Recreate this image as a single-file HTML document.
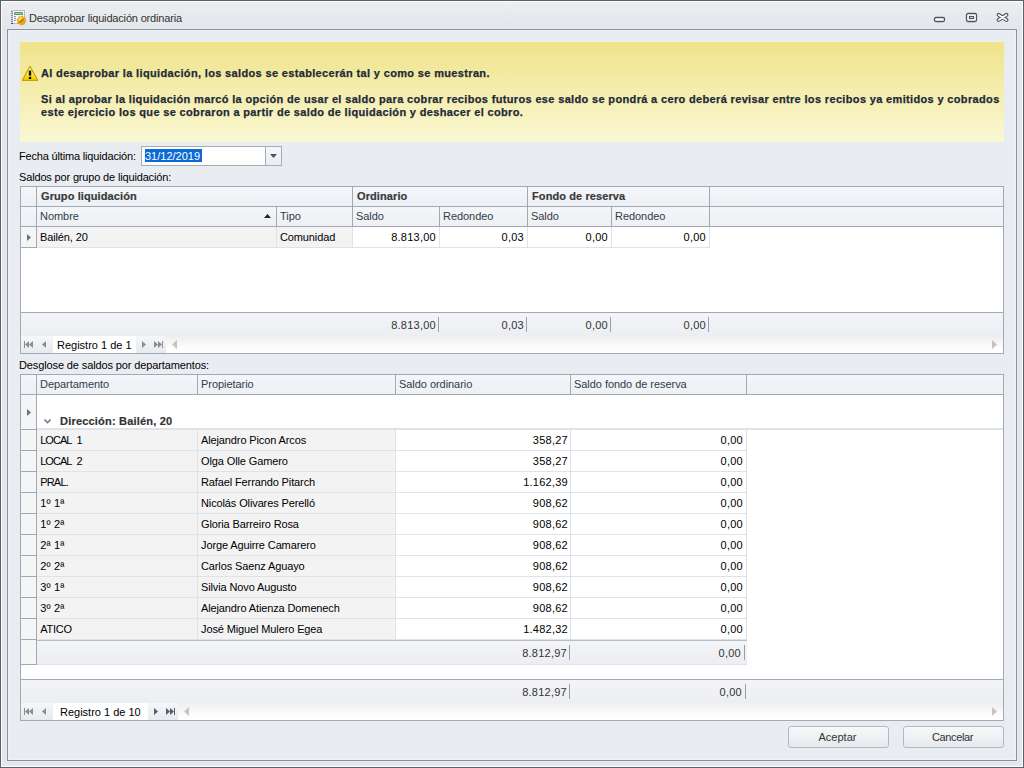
<!DOCTYPE html>
<html><head><meta charset="utf-8">
<style>
*{box-sizing:border-box;margin:0;padding:0}
html,body{width:1024px;height:768px;overflow:hidden}
body{position:relative;background:#e4e7eb;font-family:"Liberation Sans",sans-serif;font-size:11px;line-height:13px;color:#000}
.a{position:absolute}
.t{position:absolute;white-space:nowrap;line-height:13px}
.b{font-weight:bold;letter-spacing:0.345px;-webkit-text-stroke:0.25px #1f2a38}
svg{position:absolute;display:block}
</style></head><body>
<div class="a" style="left:0;top:0;width:1024px;height:768px;border:1px solid #59616d;background:linear-gradient(#eceef1,#e3e6ea 28px,#e3e6ea)"></div>
<div class="a" style="left:1px;top:1px;width:1022px;height:766px;border:1px solid #fff"></div>
<svg style="left:8px;top:6px" width="22" height="22" viewBox="0 0 22 22">
<rect x="3.5" y="4.5" width="13" height="13" fill="#f7f9fc" stroke="#b3bcc8" stroke-width="1"/>
<rect x="3" y="4" width="2" height="14" fill="#c9d0da"/>
<rect x="3" y="5" width="2" height="1" fill="#8a93a0"/><rect x="3" y="7" width="2" height="1" fill="#8a93a0"/><rect x="3" y="9" width="2" height="1" fill="#8a93a0"/><rect x="3" y="11" width="2" height="1" fill="#8a93a0"/><rect x="3" y="13" width="2" height="1" fill="#8a93a0"/><rect x="3" y="15" width="2" height="1" fill="#8a93a0"/><rect x="3" y="17" width="2" height="1" fill="#4d5765"/>
<rect x="6" y="6" width="9" height="3" rx="0.6" fill="#5c9f5c"/>
<rect x="7" y="7" width="7" height="1" fill="#9fd09f"/>
<rect x="6" y="10" width="2" height="1" fill="#7d93b5"/><rect x="6" y="12" width="2" height="1" fill="#7d93b5"/><rect x="6" y="14" width="2" height="1" fill="#7d93b5"/>
<path d="M18.11 15.52 L16.66 16.71 L16.11 18.51 L14.24 18.33 L12.58 19.21 L11.39 17.76 L9.59 17.21 L9.77 15.34 L8.89 13.68 L10.34 12.49 L10.89 10.69 L12.76 10.87 L14.42 9.99 L15.61 11.44 L17.41 11.99 L17.23 13.86Z" fill="#f3a81c" stroke="#e38c10" stroke-width="0.6"/>
<circle cx="12.6" cy="13" r="2.2" fill="#ffe24a" opacity="0.8"/>
<path d="M11 17 C11.8 14.5 13.5 13 16 12.5 C15.7 14.8 14.2 16.8 11 17Z" fill="#9a7418" opacity="0.85"/>
</svg>
<div class="t" style="left:29px;top:12px;color:#333;letter-spacing:-0.17px">Desaprobar liquidación ordinaria</div>
<svg style="left:933px;top:16px" width="13" height="7"><rect x="1.5" y="1.5" width="10" height="4" rx="1.5" fill="#fff" stroke="#50555c" stroke-width="1.3"/></svg>
<svg style="left:965px;top:12px" width="13" height="11"><rect x="1.5" y="1.5" width="10" height="8" rx="1.5" fill="#fff" stroke="#50555c" stroke-width="1.3"/><rect x="4.5" y="4.5" width="4" height="2" fill="none" stroke="#50555c" stroke-width="1.2"/></svg>
<svg style="left:996px;top:12px" width="13" height="11"><path d="M2.7 2.9L10.4 7.9M10.4 2.9L2.7 7.9" stroke="#50555c" stroke-width="4" stroke-linecap="round"/><path d="M2.7 2.9L10.4 7.9M10.4 2.9L2.7 7.9" stroke="#fff" stroke-width="1.8" stroke-linecap="round"/></svg>
<div class="a" style="left:6px;top:28px;width:1012px;height:734px;border:1px solid #e9ebee"></div>
<div class="a" style="left:7px;top:29px;width:1010px;height:732px;border:1px solid #8a9099;background:#e9ecf0"></div>
<div class="a" style="left:8px;top:30px;width:1008px;height:730px;border:1px solid #eef1f5"></div>
<div class="a" style="left:20px;top:42px;width:984px;height:100px;background:linear-gradient(#efe38a,#faf8d3)"></div>
<svg style="left:21px;top:65px" width="18" height="17" viewBox="0 0 18 17">
<defs><linearGradient id="wg" x1="0" y1="0" x2="0" y2="1"><stop offset="0" stop-color="#fff7a8"/><stop offset="0.45" stop-color="#fff04a"/><stop offset="1" stop-color="#f2c800"/></linearGradient></defs>
<path d="M9 1.3L16.6 15.3H1.4Z" fill="url(#wg)" stroke="#c99f00" stroke-width="1.2" stroke-linejoin="round"/>
<rect x="7.8" y="5.6" width="2.4" height="5" fill="#111"/>
<rect x="7.8" y="11.8" width="2.4" height="2.2" fill="#111"/>
</svg>
<div class="t b" style="left:41px;top:67px;color:#1f2a38">Al desaprobar la liquidación, los saldos se establecerán tal y como se muestran.</div>
<div class="t b" style="left:41px;top:93px;color:#1f2a38">Si al aprobar la liquidación marcó la opción de usar el saldo para cobrar recibos futuros ese saldo se pondrá a cero deberá revisar entre los recibos ya emitidos y cobrados</div>
<div class="t b" style="left:41px;top:106px;color:#1f2a38">este ejercicio los que se cobraron a partir de saldo de liquidación y deshacer el cobro.</div>
<div class="t" style="left:19px;top:150px;letter-spacing:-0.17px">Fecha última liquidación:</div>
<div class="t" style="left:19px;top:171px;letter-spacing:-0.16px">Saldos por grupo de liquidación:</div>
<div class="t" style="left:19px;top:359px;letter-spacing:-0.12px">Desglose de saldos por departamentos:</div>
<div class="a" style="left:141px;top:146px;width:141px;height:20px;border:1px solid #a6adb7;background:#fff"></div>
<div class="a" style="left:145px;top:149px;width:57px;height:13px;background:#0a6ad6"></div>
<div class="t" style="left:145px;top:150px;color:#fff">31/12/2019</div>
<div class="a" style="left:265px;top:147px;width:16px;height:18px;border-left:1px solid #a6adb7;background:linear-gradient(#f6f8fa,#e9ecf0)"></div>
<svg style="left:270px;top:154px" width="7" height="4"><path d="M0 0H7L3.5 4Z" fill="#4d535c"/></svg>
<div class="a" style="left:20px;top:186px;width:984px;height:168px;border:1px solid #a2a9b4;background:#fff"></div>
<div class="a" style="left:21px;top:187px;width:982px;height:20px;border-bottom:1px solid #a2a9b4;background:linear-gradient(#f4f6f9,#edf0f4)"></div>
<div class="a" style="left:36px;top:187px;width:1px;height:19px;background:#a2a9b4"></div>
<div class="a" style="left:352px;top:187px;width:1px;height:19px;background:#a2a9b4"></div>
<div class="a" style="left:527px;top:187px;width:1px;height:19px;background:#a2a9b4"></div>
<div class="a" style="left:709px;top:187px;width:1px;height:19px;background:#a2a9b4"></div>
<div class="t" style="left:41px;top:190px;font-weight:bold;letter-spacing:0.1px;color:#3a3a3a;-webkit-text-stroke:0.2px #3a3a3a">Grupo liquidación</div>
<div class="t" style="left:357px;top:190px;font-weight:bold;letter-spacing:0.1px;color:#3a3a3a;-webkit-text-stroke:0.2px #3a3a3a">Ordinario</div>
<div class="t" style="left:532px;top:190px;font-weight:bold;letter-spacing:0.1px;color:#3a3a3a;-webkit-text-stroke:0.2px #3a3a3a">Fondo de reserva</div>
<div class="a" style="left:21px;top:207px;width:982px;height:20px;border-bottom:1px solid #a2a9b4;background:linear-gradient(#f4f6f9,#edf0f4)"></div>
<div class="a" style="left:36px;top:207px;width:1px;height:19px;background:#a2a9b4"></div>
<div class="a" style="left:276px;top:207px;width:1px;height:19px;background:#a2a9b4"></div>
<div class="a" style="left:352px;top:207px;width:1px;height:19px;background:#a2a9b4"></div>
<div class="a" style="left:439px;top:207px;width:1px;height:19px;background:#a2a9b4"></div>
<div class="a" style="left:527px;top:207px;width:1px;height:19px;background:#a2a9b4"></div>
<div class="a" style="left:611px;top:207px;width:1px;height:19px;background:#a2a9b4"></div>
<div class="a" style="left:709px;top:207px;width:1px;height:19px;background:#a2a9b4"></div>
<div class="t" style="left:40px;top:210px;color:#333b47;letter-spacing:-0.05px">Nombre</div>
<div class="t" style="left:280px;top:210px;color:#333b47;letter-spacing:-0.05px">Tipo</div>
<div class="t" style="left:356px;top:210px;color:#333b47;letter-spacing:-0.05px">Saldo</div>
<div class="t" style="left:443px;top:210px;color:#333b47;letter-spacing:-0.05px">Redondeo</div>
<div class="t" style="left:531px;top:210px;color:#333b47;letter-spacing:-0.05px">Saldo</div>
<div class="t" style="left:615px;top:210px;color:#333b47;letter-spacing:-0.05px">Redondeo</div>
<svg style="left:264px;top:214px" width="7" height="4"><path d="M3.5 0L7 4H0Z" fill="#222"/></svg>
<div class="a" style="left:21px;top:227px;width:15px;height:20px;background:#f4f5f7"></div>
<div class="a" style="left:21px;top:247px;width:15px;height:1px;background:#a2a9b4"></div>
<div class="a" style="left:36px;top:227px;width:1px;height:21px;background:#a2a9b4"></div>
<div class="a" style="left:37px;top:227px;width:315px;height:20px;background:#f3f3f3"></div>
<div class="a" style="left:37px;top:247px;width:673px;height:1px;background:#dfe2e7"></div>
<div class="a" style="left:276px;top:227px;width:1px;height:20px;background:#dfe2e7"></div>
<div class="a" style="left:352px;top:227px;width:1px;height:20px;background:#dfe2e7"></div>
<div class="a" style="left:439px;top:227px;width:1px;height:20px;background:#dfe2e7"></div>
<div class="a" style="left:527px;top:227px;width:1px;height:20px;background:#dfe2e7"></div>
<div class="a" style="left:611px;top:227px;width:1px;height:20px;background:#dfe2e7"></div>
<div class="a" style="left:709px;top:227px;width:1px;height:20px;background:#dfe2e7"></div>
<svg style="left:27px;top:234px" width="4" height="7"><path d="M0 0L4 3.5L0 7Z" fill="#6b727d"/></svg>
<div class="t" style="left:40px;top:231px;letter-spacing:-0.12px">Bailén, 20</div>
<div class="t" style="left:280px;top:231px;letter-spacing:-0.12px">Comunidad</div>
<div class="t" style="right:588px;top:231px;text-align:right;letter-spacing:0.25px;">8.813,00</div>
<div class="t" style="right:500px;top:231px;text-align:right;letter-spacing:0.25px;">0,03</div>
<div class="t" style="right:416px;top:231px;text-align:right;letter-spacing:0.25px;">0,00</div>
<div class="t" style="right:318px;top:231px;text-align:right;letter-spacing:0.25px;">0,00</div>
<div class="a" style="left:21px;top:312px;width:982px;height:1px;background:#a2a9b4"></div>
<div class="a" style="left:21px;top:313px;width:982px;height:23px;background:linear-gradient(#f3f4f7,#eceef2)"></div>
<div class="t" style="right:588px;top:319px;text-align:right;letter-spacing:0.25px;color:#333">8.813,00</div>
<div class="t" style="right:500px;top:319px;text-align:right;letter-spacing:0.25px;color:#333">0,03</div>
<div class="t" style="right:416px;top:319px;text-align:right;letter-spacing:0.25px;color:#333">0,00</div>
<div class="t" style="right:318px;top:319px;text-align:right;letter-spacing:0.25px;color:#333">0,00</div>
<div class="a" style="left:438px;top:317px;width:1px;height:15px;background:#9aa0a8"></div>
<div class="a" style="left:526px;top:317px;width:1px;height:15px;background:#9aa0a8"></div>
<div class="a" style="left:610px;top:317px;width:1px;height:15px;background:#9aa0a8"></div>
<div class="a" style="left:708px;top:317px;width:1px;height:15px;background:#9aa0a8"></div>
<div class="a" style="left:21px;top:336px;width:982px;height:17px;background:linear-gradient(#efeeed,#fdfdfd 70%,#fff)"></div>
<div class="a" style="left:21px;top:336px;width:32px;height:17px;background:linear-gradient(#f5f7fa,#e7eaee)"></div>
<div class="a" style="left:53px;top:336px;width:83px;height:17px;background:#fff"></div>
<div class="a" style="left:136px;top:336px;width:30px;height:17px;background:linear-gradient(#f5f7fa,#e7eaee)"></div>
<div class="t" style="left:57px;top:339px;color:#000">Registro 1 de 1</div>
<svg style="left:24px;top:341px" width="10" height="7"><path d="M0 0H1V7H0Z M1 3.5L5 0V7Z M5 3.5L9 0V7Z" fill="#8c8c8c"/></svg>
<svg style="left:42px;top:341px" width="4" height="7"><path d="M0 3.5L4 0V7Z" fill="#8c8c8c"/></svg>
<svg style="left:142px;top:341px" width="4" height="7"><path d="M0 0L4 3.5L0 7Z" fill="#8c8c8c"/></svg>
<svg style="left:154px;top:341px" width="10" height="7"><path d="M0 0L4 3.5L0 7Z M4 0L8 3.5L4 7Z M8 0H9V7H8Z" fill="#8c8c8c"/></svg>
<svg style="left:172px;top:340px" width="5" height="9"><path d="M0 4.5L5 0V9Z" fill="#c4c4c4"/></svg>
<svg style="left:992px;top:340px" width="5" height="9"><path d="M0 0L5 4.5L0 9Z" fill="#c4c4c4"/></svg>
<div class="a" style="left:20px;top:374px;width:984px;height:347px;border:1px solid #a2a9b4;background:#fff"></div>
<div class="a" style="left:21px;top:375px;width:982px;height:20px;border-bottom:1px solid #a2a9b4;background:linear-gradient(#f4f6f9,#edf0f4)"></div>
<div class="a" style="left:36px;top:375px;width:1px;height:19px;background:#a2a9b4"></div>
<div class="a" style="left:197px;top:375px;width:1px;height:19px;background:#a2a9b4"></div>
<div class="a" style="left:395px;top:375px;width:1px;height:19px;background:#a2a9b4"></div>
<div class="a" style="left:570px;top:375px;width:1px;height:19px;background:#a2a9b4"></div>
<div class="a" style="left:746px;top:375px;width:1px;height:19px;background:#a2a9b4"></div>
<div class="t" style="left:40px;top:378px;color:#333b47;letter-spacing:-0.05px">Departamento</div>
<div class="t" style="left:201px;top:378px;color:#333b47;letter-spacing:-0.05px">Propietario</div>
<div class="t" style="left:399px;top:378px;color:#333b47;letter-spacing:-0.05px">Saldo ordinario</div>
<div class="t" style="left:574px;top:378px;color:#333b47;letter-spacing:-0.05px">Saldo fondo de reserva</div>
<div class="a" style="left:21px;top:395px;width:15px;height:270px;background:#f4f5f7"></div>
<div class="a" style="left:36px;top:395px;width:1px;height:270px;background:#a2a9b4"></div>
<div class="a" style="left:21px;top:664px;width:16px;height:1px;background:#a2a9b4"></div>
<svg style="left:27px;top:409px" width="4" height="7"><path d="M0 0L4 3.5L0 7Z" fill="#6b727d"/></svg>
<div class="a" style="left:37px;top:428px;width:966px;height:2px;background:#dfe2e7"></div>
<div class="a" style="left:21px;top:429px;width:15px;height:1px;background:#a2a9b4"></div>
<svg style="left:44px;top:419px" width="7" height="5"><path d="M0.5 0.5L3.5 3.5L6.5 0.5" stroke="#7b818a" stroke-width="1.6" fill="none"/></svg>
<div class="t" style="left:60px;top:415px;font-weight:bold;letter-spacing:0.2px;color:#333;-webkit-text-stroke:0.2px #333">Dirección: Bailén, 20</div>
<div class="a" style="left:37px;top:430px;width:358px;height:20px;background:#f3f3f3"></div>
<div class="a" style="left:37px;top:450px;width:710px;height:1px;background:#dfe2e7"></div>
<div class="a" style="left:21px;top:450px;width:15px;height:1px;background:#a2a9b4"></div>
<div class="a" style="left:197px;top:430px;width:1px;height:20px;background:#dfe2e7"></div>
<div class="a" style="left:395px;top:430px;width:1px;height:20px;background:#dfe2e7"></div>
<div class="a" style="left:570px;top:430px;width:1px;height:20px;background:#dfe2e7"></div>
<div class="a" style="left:746px;top:430px;width:1px;height:20px;background:#dfe2e7"></div>
<div class="t" style="left:40.2px;top:434px;"><span style="letter-spacing:-0.95px">LOCAL</span><span style="display:inline-block;width:5px"></span>1</div>
<div class="t" style="left:201px;top:434px;letter-spacing:-0.12px">Alejandro Picon Arcos</div>
<div class="t" style="right:456px;top:434px;text-align:right;letter-spacing:0.25px;">358,27</div>
<div class="t" style="right:281px;top:434px;text-align:right;letter-spacing:0.25px;">0,00</div>
<div class="a" style="left:37px;top:451px;width:358px;height:20px;background:#f3f3f3"></div>
<div class="a" style="left:37px;top:471px;width:710px;height:1px;background:#dfe2e7"></div>
<div class="a" style="left:21px;top:471px;width:15px;height:1px;background:#a2a9b4"></div>
<div class="a" style="left:197px;top:451px;width:1px;height:20px;background:#dfe2e7"></div>
<div class="a" style="left:395px;top:451px;width:1px;height:20px;background:#dfe2e7"></div>
<div class="a" style="left:570px;top:451px;width:1px;height:20px;background:#dfe2e7"></div>
<div class="a" style="left:746px;top:451px;width:1px;height:20px;background:#dfe2e7"></div>
<div class="t" style="left:40.2px;top:455px;"><span style="letter-spacing:-0.95px">LOCAL</span><span style="display:inline-block;width:5px"></span>2</div>
<div class="t" style="left:201px;top:455px;letter-spacing:-0.12px">Olga Olle Gamero</div>
<div class="t" style="right:456px;top:455px;text-align:right;letter-spacing:0.25px;">358,27</div>
<div class="t" style="right:281px;top:455px;text-align:right;letter-spacing:0.25px;">0,00</div>
<div class="a" style="left:37px;top:472px;width:358px;height:20px;background:#f3f3f3"></div>
<div class="a" style="left:37px;top:492px;width:710px;height:1px;background:#dfe2e7"></div>
<div class="a" style="left:21px;top:492px;width:15px;height:1px;background:#a2a9b4"></div>
<div class="a" style="left:197px;top:472px;width:1px;height:20px;background:#dfe2e7"></div>
<div class="a" style="left:395px;top:472px;width:1px;height:20px;background:#dfe2e7"></div>
<div class="a" style="left:570px;top:472px;width:1px;height:20px;background:#dfe2e7"></div>
<div class="a" style="left:746px;top:472px;width:1px;height:20px;background:#dfe2e7"></div>
<div class="t" style="left:40.2px;top:476px;letter-spacing:-0.8px">PRAL.</div>
<div class="t" style="left:201px;top:476px;letter-spacing:-0.12px">Rafael Ferrando Pitarch</div>
<div class="t" style="right:456px;top:476px;text-align:right;letter-spacing:0.25px;">1.162,39</div>
<div class="t" style="right:281px;top:476px;text-align:right;letter-spacing:0.25px;">0,00</div>
<div class="a" style="left:37px;top:493px;width:358px;height:20px;background:#f3f3f3"></div>
<div class="a" style="left:37px;top:513px;width:710px;height:1px;background:#dfe2e7"></div>
<div class="a" style="left:21px;top:513px;width:15px;height:1px;background:#a2a9b4"></div>
<div class="a" style="left:197px;top:493px;width:1px;height:20px;background:#dfe2e7"></div>
<div class="a" style="left:395px;top:493px;width:1px;height:20px;background:#dfe2e7"></div>
<div class="a" style="left:570px;top:493px;width:1px;height:20px;background:#dfe2e7"></div>
<div class="a" style="left:746px;top:493px;width:1px;height:20px;background:#dfe2e7"></div>
<div class="t" style="left:40.2px;top:497px;letter-spacing:0.2px">1º 1ª</div>
<div class="t" style="left:201px;top:497px;letter-spacing:-0.12px">Nicolás Olivares Perelló</div>
<div class="t" style="right:456px;top:497px;text-align:right;letter-spacing:0.25px;">908,62</div>
<div class="t" style="right:281px;top:497px;text-align:right;letter-spacing:0.25px;">0,00</div>
<div class="a" style="left:37px;top:514px;width:358px;height:20px;background:#f3f3f3"></div>
<div class="a" style="left:37px;top:534px;width:710px;height:1px;background:#dfe2e7"></div>
<div class="a" style="left:21px;top:534px;width:15px;height:1px;background:#a2a9b4"></div>
<div class="a" style="left:197px;top:514px;width:1px;height:20px;background:#dfe2e7"></div>
<div class="a" style="left:395px;top:514px;width:1px;height:20px;background:#dfe2e7"></div>
<div class="a" style="left:570px;top:514px;width:1px;height:20px;background:#dfe2e7"></div>
<div class="a" style="left:746px;top:514px;width:1px;height:20px;background:#dfe2e7"></div>
<div class="t" style="left:40.2px;top:518px;letter-spacing:0.2px">1º 2ª</div>
<div class="t" style="left:201px;top:518px;letter-spacing:-0.12px">Gloria Barreiro Rosa</div>
<div class="t" style="right:456px;top:518px;text-align:right;letter-spacing:0.25px;">908,62</div>
<div class="t" style="right:281px;top:518px;text-align:right;letter-spacing:0.25px;">0,00</div>
<div class="a" style="left:37px;top:535px;width:358px;height:20px;background:#f3f3f3"></div>
<div class="a" style="left:37px;top:555px;width:710px;height:1px;background:#dfe2e7"></div>
<div class="a" style="left:21px;top:555px;width:15px;height:1px;background:#a2a9b4"></div>
<div class="a" style="left:197px;top:535px;width:1px;height:20px;background:#dfe2e7"></div>
<div class="a" style="left:395px;top:535px;width:1px;height:20px;background:#dfe2e7"></div>
<div class="a" style="left:570px;top:535px;width:1px;height:20px;background:#dfe2e7"></div>
<div class="a" style="left:746px;top:535px;width:1px;height:20px;background:#dfe2e7"></div>
<div class="t" style="left:40.2px;top:539px;letter-spacing:0.2px">2ª 1ª</div>
<div class="t" style="left:201px;top:539px;letter-spacing:-0.12px">Jorge Aguirre Camarero</div>
<div class="t" style="right:456px;top:539px;text-align:right;letter-spacing:0.25px;">908,62</div>
<div class="t" style="right:281px;top:539px;text-align:right;letter-spacing:0.25px;">0,00</div>
<div class="a" style="left:37px;top:556px;width:358px;height:20px;background:#f3f3f3"></div>
<div class="a" style="left:37px;top:576px;width:710px;height:1px;background:#dfe2e7"></div>
<div class="a" style="left:21px;top:576px;width:15px;height:1px;background:#a2a9b4"></div>
<div class="a" style="left:197px;top:556px;width:1px;height:20px;background:#dfe2e7"></div>
<div class="a" style="left:395px;top:556px;width:1px;height:20px;background:#dfe2e7"></div>
<div class="a" style="left:570px;top:556px;width:1px;height:20px;background:#dfe2e7"></div>
<div class="a" style="left:746px;top:556px;width:1px;height:20px;background:#dfe2e7"></div>
<div class="t" style="left:40.2px;top:560px;letter-spacing:0.2px">2º 2ª</div>
<div class="t" style="left:201px;top:560px;letter-spacing:-0.12px">Carlos Saenz Aguayo</div>
<div class="t" style="right:456px;top:560px;text-align:right;letter-spacing:0.25px;">908,62</div>
<div class="t" style="right:281px;top:560px;text-align:right;letter-spacing:0.25px;">0,00</div>
<div class="a" style="left:37px;top:577px;width:358px;height:20px;background:#f3f3f3"></div>
<div class="a" style="left:37px;top:597px;width:710px;height:1px;background:#dfe2e7"></div>
<div class="a" style="left:21px;top:597px;width:15px;height:1px;background:#a2a9b4"></div>
<div class="a" style="left:197px;top:577px;width:1px;height:20px;background:#dfe2e7"></div>
<div class="a" style="left:395px;top:577px;width:1px;height:20px;background:#dfe2e7"></div>
<div class="a" style="left:570px;top:577px;width:1px;height:20px;background:#dfe2e7"></div>
<div class="a" style="left:746px;top:577px;width:1px;height:20px;background:#dfe2e7"></div>
<div class="t" style="left:40.2px;top:581px;letter-spacing:0.2px">3º 1ª</div>
<div class="t" style="left:201px;top:581px;letter-spacing:-0.12px">Silvia Novo Augusto</div>
<div class="t" style="right:456px;top:581px;text-align:right;letter-spacing:0.25px;">908,62</div>
<div class="t" style="right:281px;top:581px;text-align:right;letter-spacing:0.25px;">0,00</div>
<div class="a" style="left:37px;top:598px;width:358px;height:20px;background:#f3f3f3"></div>
<div class="a" style="left:37px;top:618px;width:710px;height:1px;background:#dfe2e7"></div>
<div class="a" style="left:21px;top:618px;width:15px;height:1px;background:#a2a9b4"></div>
<div class="a" style="left:197px;top:598px;width:1px;height:20px;background:#dfe2e7"></div>
<div class="a" style="left:395px;top:598px;width:1px;height:20px;background:#dfe2e7"></div>
<div class="a" style="left:570px;top:598px;width:1px;height:20px;background:#dfe2e7"></div>
<div class="a" style="left:746px;top:598px;width:1px;height:20px;background:#dfe2e7"></div>
<div class="t" style="left:40.2px;top:602px;letter-spacing:0.2px">3º 2ª</div>
<div class="t" style="left:201px;top:602px;letter-spacing:-0.12px">Alejandro Atienza Domenech</div>
<div class="t" style="right:456px;top:602px;text-align:right;letter-spacing:0.25px;">908,62</div>
<div class="t" style="right:281px;top:602px;text-align:right;letter-spacing:0.25px;">0,00</div>
<div class="a" style="left:37px;top:619px;width:358px;height:20px;background:#f3f3f3"></div>
<div class="a" style="left:37px;top:639px;width:710px;height:1px;background:#dfe2e7"></div>
<div class="a" style="left:21px;top:639px;width:15px;height:1px;background:#a2a9b4"></div>
<div class="a" style="left:197px;top:619px;width:1px;height:20px;background:#dfe2e7"></div>
<div class="a" style="left:395px;top:619px;width:1px;height:20px;background:#dfe2e7"></div>
<div class="a" style="left:570px;top:619px;width:1px;height:20px;background:#dfe2e7"></div>
<div class="a" style="left:746px;top:619px;width:1px;height:20px;background:#dfe2e7"></div>
<div class="t" style="left:40.2px;top:623px;letter-spacing:-0.25px">ATICO</div>
<div class="t" style="left:201px;top:623px;letter-spacing:-0.12px">José Miguel Mulero Egea</div>
<div class="t" style="right:456px;top:623px;text-align:right;letter-spacing:0.25px;">1.482,32</div>
<div class="t" style="right:281px;top:623px;text-align:right;letter-spacing:0.25px;">0,00</div>
<div class="a" style="left:37px;top:640px;width:710px;height:1px;background:#b9bec6"></div>
<div class="a" style="left:37px;top:641px;width:710px;height:23px;background:linear-gradient(#f3f4f7,#eceef2)"></div>
<div class="a" style="left:37px;top:664px;width:710px;height:1px;background:#dfe2e7"></div>
<div class="t" style="right:457px;top:647px;text-align:right;letter-spacing:0.25px;color:#333">8.812,97</div>
<div class="t" style="right:283px;top:647px;text-align:right;letter-spacing:0.25px;color:#333">0,00</div>
<div class="a" style="left:569px;top:645px;width:1px;height:15px;background:#9aa0a8"></div>
<div class="a" style="left:744px;top:645px;width:1px;height:15px;background:#9aa0a8"></div>
<div class="a" style="left:21px;top:679px;width:982px;height:1px;background:#a2a9b4"></div>
<div class="a" style="left:21px;top:680px;width:982px;height:23px;background:linear-gradient(#f3f4f7,#eceef2)"></div>
<div class="t" style="right:457px;top:686px;text-align:right;letter-spacing:0.25px;color:#333">8.812,97</div>
<div class="t" style="right:282px;top:686px;text-align:right;letter-spacing:0.25px;color:#333">0,00</div>
<div class="a" style="left:569px;top:684px;width:1px;height:15px;background:#9aa0a8"></div>
<div class="a" style="left:745px;top:684px;width:1px;height:15px;background:#9aa0a8"></div>
<div class="a" style="left:21px;top:703px;width:982px;height:17px;background:linear-gradient(#efeeed,#fdfdfd 70%,#fff)"></div>
<div class="a" style="left:21px;top:703px;width:32px;height:17px;background:linear-gradient(#f5f7fa,#e7eaee)"></div>
<div class="a" style="left:53px;top:703px;width:95px;height:17px;background:#fff"></div>
<div class="a" style="left:148px;top:703px;width:30px;height:17px;background:linear-gradient(#f5f7fa,#e7eaee)"></div>
<div class="t" style="left:60px;top:706px;color:#000">Registro 1 de 10</div>
<svg style="left:24px;top:708px" width="10" height="7"><path d="M0 0H1V7H0Z M1 3.5L5 0V7Z M5 3.5L9 0V7Z" fill="#8c8c8c"/></svg>
<svg style="left:42px;top:708px" width="4" height="7"><path d="M0 3.5L4 0V7Z" fill="#8c8c8c"/></svg>
<svg style="left:154px;top:708px" width="4" height="7"><path d="M0 0L4 3.5L0 7Z" fill="#565d68"/></svg>
<svg style="left:166px;top:708px" width="10" height="7"><path d="M0 0L4 3.5L0 7Z M4 0L8 3.5L4 7Z M8 0H9V7H8Z" fill="#565d68"/></svg>
<svg style="left:184px;top:707px" width="5" height="9"><path d="M0 4.5L5 0V9Z" fill="#c4c4c4"/></svg>
<svg style="left:992px;top:707px" width="5" height="9"><path d="M0 0L5 4.5L0 9Z" fill="#c4c4c4"/></svg>
<div class="a" style="left:788px;top:726px;width:101px;height:22px;border:1px solid #b3b9c1;border-radius:3px;background:linear-gradient(#f7f8fa,#e6e9ed);color:#333;text-align:center;line-height:20px;padding-right:2px;letter-spacing:0px">Aceptar</div>
<div class="a" style="left:903px;top:726px;width:101px;height:22px;border:1px solid #b3b9c1;border-radius:3px;background:linear-gradient(#f7f8fa,#e6e9ed);color:#333;text-align:center;line-height:20px;padding-right:2px;letter-spacing:-0.35px">Cancelar</div>
</body></html>
